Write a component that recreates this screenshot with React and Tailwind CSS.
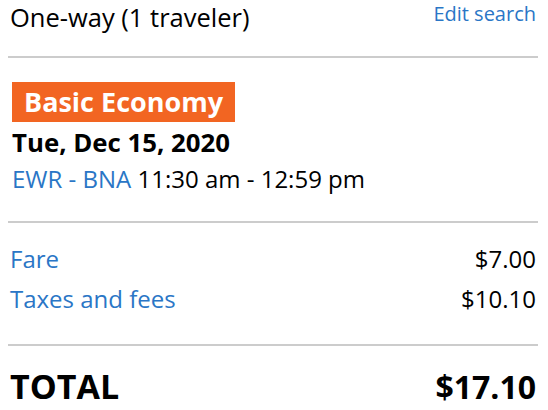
import React from 'react';

const Row = ({ label, amount }) => (
  <div className="flex items-center justify-between pr-[2px] text-[24px] leading-[30px]">
    <span className="text-[#2a76c6]">{label}</span>
    <span className="text-black">{amount}</span>
  </div>
);

export default function App() {
  return (
    <div className="w-[548px] h-[410px] overflow-hidden bg-white pl-[8px] pr-[10px] text-black" style={{ fontFamily: '"Open Sans", "Noto Sans", sans-serif' }}>
      {/* header */}
      <div className="flex items-start justify-between pt-[2px] pl-[2px] pr-[2px]">
        <span className="text-[25.5px] leading-[30px]">One-way (1 traveler)</span>
        <a className="text-[20px] leading-[24px] text-[#2a76c6]">Edit search</a>
      </div>
      <div className="mt-[24px] h-[2px] bg-[#cccccc]" />

      {/* flight */}
      <div className="pt-[24px] pb-[27px] pl-[4px]">
        <span className="inline-block bg-[#f26522] px-[12px] text-[27px] font-bold leading-[40px] text-white">
          Basic Economy
        </span>
        <div className="mt-[5px] text-[25.8px] font-bold leading-[30px]">Tue, Dec 15, 2020</div>
        <div className="mt-[7px] text-[24px] leading-[30px]">
          <span className="text-[#2a76c6]">EWR - BNA</span> 11:30 am - 12:59 pm
        </div>
      </div>
      <div className="h-[2px] bg-[#cccccc]" />

      {/* fare */}
      <div className="flex flex-col gap-[10px] pt-[21px] pb-[30px] pl-[2px]">
        <Row label="Fare" amount="$7.00" />
        <Row label="Taxes and fees" amount="$10.10" />
      </div>
      <div className="h-[2px] bg-[#cccccc]" />

      <div className="flex items-baseline justify-between pt-[20px] pl-[2px] pr-[2px] font-bold leading-[40px]">
        <span className="text-[34px]">TOTAL</span>
        <span className="text-[32px]">$17.10</span>
      </div>
    </div>
  );
}
